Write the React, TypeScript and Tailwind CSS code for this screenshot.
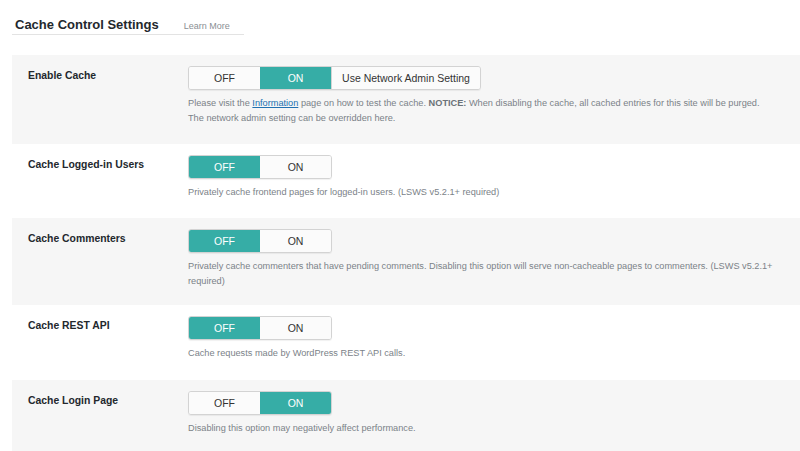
import React from "react";

const font = { fontFamily: '"Liberation Sans", Arial, sans-serif' };

function Toggle({ value, network }: { value: "on" | "off"; network?: boolean }) {
  const base = "h-[23px] flex items-center justify-center text-[10.5px]";
  const active = "bg-[#36ada6] text-white";
  const inactive = "bg-[#fbfbfb] text-[#333]";
  return (
    <div className="flex h-[24px] rounded-[3px] border border-[#d3d3d3] shadow-[0_1px_1px_rgba(0,0,0,0.06)] overflow-hidden w-fit">
      <div className={`${base} w-[71px] ${value === "off" ? active : inactive}`}>OFF</div>
      <div className={`${base} w-[71px] ${value === "on" ? active : inactive}`}>ON</div>
      {network && (
        <div className={`${base} ${inactive} px-[8px] w-[149px] border-l border-[#d3d3d3] text-[10.5px]`}>Use Network Admin Setting</div>
      )}
    </div>
  );
}

function Row({
  label,
  gray,
  children,
  toggle,
  h,
}: {
  label: string;
  gray?: boolean;
  children: React.ReactNode;
  toggle: React.ReactNode;
  h: string;
}) {
  return (
    <div className={`flex ${h} pt-[11px] ${gray ? "bg-[#f6f6f6]" : "bg-white"}`}>
      <div className="w-[176px] shrink-0 pl-[16px] pt-[2px] text-[10.4px] font-bold text-[#23282d]">{label}</div>
      <div className="flex flex-col flex-1 min-w-0">
        {toggle}
        <div className="mt-[6px] text-[9.2px] leading-[15px] text-[#7b8288] pr-[20px]">{children}</div>
      </div>
    </div>
  );
}

export default function App() {
  return (
    <div className="w-[800px] h-[451px] overflow-hidden bg-white" style={font}>
      <div className="pl-[12px]">
        <div className="flex items-end w-[232px] border-b border-[#e3e3e3] pt-[17px] pb-[1px] pl-[3px]">
          <div className="text-[13px] font-bold text-[#23282d] leading-[16px]">Cache Control Settings</div>
          <div className="ml-[25px] text-[9px] text-[#8a8f94] leading-[14px]">Learn More</div>
        </div>
        <div className="h-[20px]" />
        <Row label="Enable Cache" gray h="h-[89px]" toggle={<Toggle value="on" network />}>
          <div className="whitespace-nowrap">
            Please visit the{" "}
            <span className="text-[#2271b1] underline">Information</span> page on how to test the cache.{" "}
            <b className="text-[#6b7278]">NOTICE:</b> When disabling the cache, all cached entries for this site will be purged.
          </div>
          <div>The network admin setting can be overridden here.</div>
        </Row>
        <Row label="Cache Logged-in Users" h="h-[74px]" toggle={<Toggle value="off" />}>
          Privately cache frontend pages for logged-in users. (LSWS v5.2.1+ required)
        </Row>
        <Row label="Cache Commenters" gray h="h-[87px]" toggle={<Toggle value="off" />}>
          Privately cache commenters that have pending comments. Disabling this option will serve non-cacheable pages to commenters. (LSWS v5.2.1+ required)
        </Row>
        <Row label="Cache REST API" h="h-[75px]" toggle={<Toggle value="off" />}>
          Cache requests made by WordPress REST API calls.
        </Row>
        <Row label="Cache Login Page" gray h="h-[75px]" toggle={<Toggle value="on" />}>
          Disabling this option may negatively affect performance.
        </Row>
      </div>
    </div>
  );
}
